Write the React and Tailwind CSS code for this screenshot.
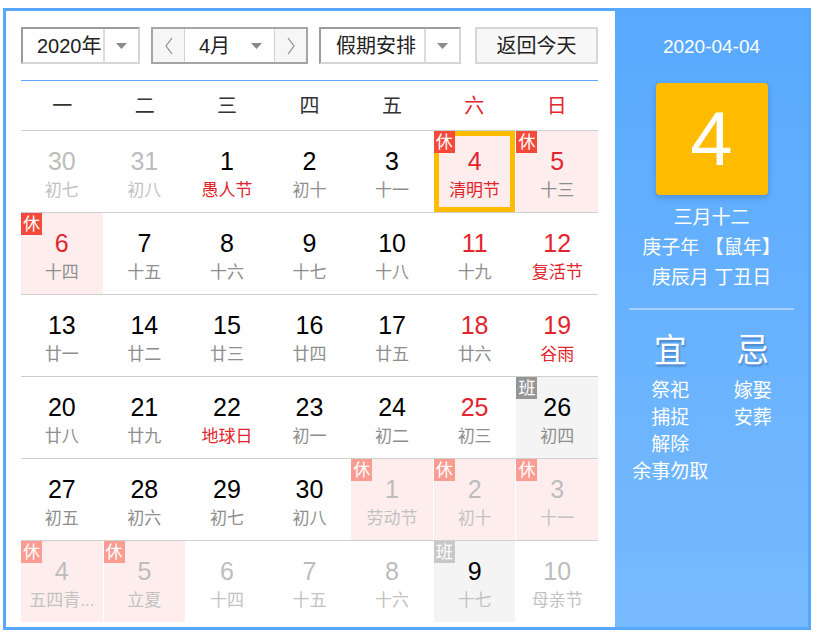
import React from 'react';

const FONT = "font-['Liberation_Sans','Noto_Sans_CJK_SC',sans-serif]";

const weeks = [
  [
    { d: 30, l: '初七', o: true },
    { d: 31, l: '初八', o: true },
    { d: 1, l: '愚人节', lr: true },
    { d: 2, l: '初十' },
    { d: 3, l: '十一' },
    { d: 4, l: '清明节', r: true, lr: true, b: '休', sel: true },
    { d: 5, l: '十三', r: true, b: '休' },
  ],
  [
    { d: 6, l: '十四', r: true, b: '休' },
    { d: 7, l: '十五' },
    { d: 8, l: '十六' },
    { d: 9, l: '十七' },
    { d: 10, l: '十八' },
    { d: 11, l: '十九', r: true },
    { d: 12, l: '复活节', r: true, lr: true },
  ],
  [
    { d: 13, l: '廿一' },
    { d: 14, l: '廿二' },
    { d: 15, l: '廿三' },
    { d: 16, l: '廿四' },
    { d: 17, l: '廿五' },
    { d: 18, l: '廿六', r: true },
    { d: 19, l: '谷雨', r: true, lr: true },
  ],
  [
    { d: 20, l: '廿八' },
    { d: 21, l: '廿九' },
    { d: 22, l: '地球日', lr: true },
    { d: 23, l: '初一' },
    { d: 24, l: '初二' },
    { d: 25, l: '初三', r: true },
    { d: 26, l: '初四', b: '班' },
  ],
  [
    { d: 27, l: '初五' },
    { d: 28, l: '初六' },
    { d: 29, l: '初七' },
    { d: 30, l: '初八' },
    { d: 1, l: '劳动节', o: true, b: '休' },
    { d: 2, l: '初十', o: true, b: '休' },
    { d: 3, l: '十一', o: true, b: '休' },
  ],
  [
    { d: 4, l: '五四青...', o: true, b: '休' },
    { d: 5, l: '立夏', o: true, b: '休' },
    { d: 6, l: '十四', o: true },
    { d: 7, l: '十五', o: true },
    { d: 8, l: '十六', o: true },
    { d: 9, l: '十七', o: true, b: '班' },
    { d: 10, l: '母亲节', o: true },
  ],
];

function Caret() {
  return (
    <svg width="11" height="6" viewBox="0 0 11 6">
      <polygon points="0,0 11,0 5.5,6" fill="#8a8a8a" />
    </svg>
  );
}

function Chevron({ dir }) {
  return (
    <svg width="10" height="20" viewBox="0 0 10 20">
      <polyline
        points={dir === 'left' ? '8,2 2,10 8,18' : '2,2 8,10 2,18'}
        fill="none"
        stroke="#8a8a8a"
        strokeWidth="1.2"
      />
    </svg>
  );
}

function SelectBox({ label, width, textPad }) {
  return (
    <div
      className={`flex h-[37px] ${width} border-2 border-t-[#9c9c9c] border-l-[#9c9c9c] border-r-[#d5d5d5] border-b-[#d5d5d5] bg-white`}
    >
      <div className={`flex flex-1 items-center ${textPad} text-[20px] text-[#222]`}>{label}</div>
      <div className="flex w-[35px] items-center justify-center border-l-2 border-[#dcdcdc]">
        <Caret />
      </div>
    </div>
  );
}

function DayCell({ c }) {
  let bg = 'bg-white';
  if (c.b === '休') bg = 'bg-[#fdeeed]';
  if (c.b === '班') bg = 'bg-[#f4f4f4]';

  let num = 'text-black';
  if (c.o && c.b !== '班') num = 'text-[#bdbdbd]';
  else if (c.r) num = 'text-[#e2252d]';

  let lunar = 'text-[#8e8e8e]';
  if (c.o) lunar = 'text-[#c2c2c2]';
  else if (c.lr) lunar = 'text-[#e2252d]';

  let badge = '';
  if (c.b === '休') badge = c.o ? 'bg-[#fb9c93]' : 'bg-[#f34a3b]';
  if (c.b === '班') badge = c.o ? 'bg-[#c8c8c8]' : 'bg-[#959595]';

  return (
    <div className={`relative flex h-[81px] flex-col items-center ${bg}`}>
      {c.sel && <div className="absolute inset-0 border-[5px] border-[#ffbb00]" />}
      {c.b && (
        <div
          className={`absolute left-0 top-0 flex h-[22px] w-[21px] items-center justify-center text-[17px] leading-none text-white ${badge}`}
        >
          {c.b}
        </div>
      )}
      <div className={`relative mt-[16px] text-[25px] leading-[28px] ${num}`}>{c.d}</div>
      <div className={`relative mt-[5px] text-[17px] leading-[22px] ${lunar}`}>{c.l}</div>
    </div>
  );
}

export default function App() {
  const heads = ['一', '二', '三', '四', '五', '六', '日'];

  return (
    <div className={`h-[635px] w-[818px] bg-white pl-[3px] pt-[8px] ${FONT}`}>
      <div className="flex h-[622px] w-[808px] border-[3px] border-[#58a9fd]">
        {/* Calendar */}
        <div className="w-[609px] pl-[15px] pr-[17px] pt-[16px]">
          <div className="flex h-[37px] items-center">
            <SelectBox label="2020年" width="w-[119px]" textPad="pl-[14px]" />

            <div className="ml-[11px] flex h-[37px] w-[157px] border-2 border-[#a5a5a5]">
              <div className="flex w-[32px] items-center justify-center border-r border-[#d2d2d2] bg-[#f6f6f6]">
                <Chevron dir="left" />
              </div>
              <div className="flex flex-1 items-center bg-white pl-[14px] text-[20px] text-[#222]">
                <span className="flex-1">4月</span>
                <span className="mr-[12px]">
                  <Caret />
                </span>
              </div>
              <div className="flex w-[32px] items-center justify-center border-l border-[#d2d2d2] bg-[#f6f6f6]">
                <Chevron dir="right" />
              </div>
            </div>

            <div className="ml-[11px]">
              <SelectBox label="假期安排" width="w-[142px]" textPad="pl-[15px]" />
            </div>

            <button className="ml-[14px] flex h-[37px] w-[123px] items-center justify-center border-2 border-[#d6d6d6] bg-[#f7f7f7] text-[20px] text-[#222]">
              返回今天
            </button>
          </div>

          <div className="mt-[16px] h-px bg-[#5aa9fd]" />

          <div className="grid h-[50px] grid-cols-7 items-center border-b border-[#cfcfcf] text-[20px]">
            {heads.map((h, i) => (
              <div key={h} className={`text-center ${i >= 5 ? 'text-[#e2252d]' : 'text-[#333]'}`}>
                {h}
              </div>
            ))}
          </div>

          {weeks.map((w, i) => (
            <div
              key={i}
              className={`grid grid-cols-7 gap-x-px ${i < weeks.length - 1 ? 'border-b border-[#cfcfcf]' : ''}`}
            >
              {w.map((c, j) => (
                <DayCell key={j} c={c} />
              ))}
            </div>
          ))}
        </div>

        {/* Side panel */}
        <div className="flex w-[193px] flex-col items-center bg-gradient-to-b from-[#57a9fe] to-[#77bafe] text-white">
          <div className="mt-[24px] text-[19px] leading-[24px]">2020-04-04</div>
          <div className="mt-[24px] flex h-[112px] w-[112px] items-center justify-center rounded-[4px] bg-[#ffbb00] text-[76px] leading-none shadow-[0_3px_6px_rgba(40,90,160,0.35)]">
            4
          </div>
          <div className="mt-[8px] text-center text-[19px] leading-[30px]">
            <div>三月十二</div>
            <div>庚子年 【鼠年】</div>
            <div>庚辰月 丁丑日</div>
          </div>
          <div className="mt-[15px] h-[2px] w-[165px] bg-white/40" />
          <div className="mt-[21px] grid w-[165px] grid-cols-2 text-center">
            <div>
              <div className="text-[33px] leading-[40px] [text-shadow:1px_2px_2px_rgba(30,70,140,0.45)]">宜</div>
              <div className="mt-[6px] text-[19px] leading-[27px]">
                <div>祭祀</div>
                <div>捕捉</div>
                <div>解除</div>
                <div>余事勿取</div>
              </div>
            </div>
            <div>
              <div className="text-[33px] leading-[40px] [text-shadow:1px_2px_2px_rgba(30,70,140,0.45)]">忌</div>
              <div className="mt-[6px] text-[19px] leading-[27px]">
                <div>嫁娶</div>
                <div>安葬</div>
              </div>
            </div>
          </div>
        </div>
      </div>
    </div>
  );
}
